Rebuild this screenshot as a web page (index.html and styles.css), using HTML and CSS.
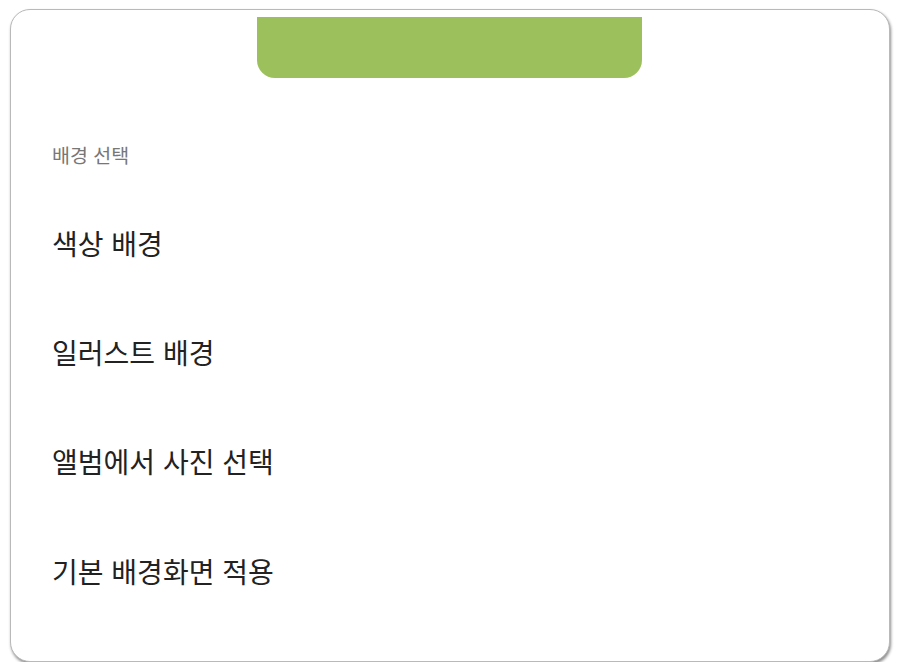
FILE: index.html
```html
<!DOCTYPE html>
<html lang="ko">
<head>
<meta charset="utf-8">
<link rel="stylesheet" href="styles.css">
</head>
<body>
<div class="card">
  <div class="preview"></div>
  <div class="section-title">배경 선택</div>
  <ul class="options">
    <li class="option">색상 배경</li>
    <li class="option">일러스트 배경</li>
    <li class="option">앨범에서 사진 선택</li>
    <li class="option">기본 배경화면 적용</li>
  </ul>
</div>
</body>
</html>
```
FILE: styles.css
```css
html, body {
  margin: 0;
  padding: 0;
  background: #ffffff;
}
body {
  font-family: "Noto Sans CJK KR", "Noto Sans", sans-serif;
  padding: 9px 10px 0 10px;
}
.card {
  box-sizing: border-box;
  width: 880px;
  height: 653px;
  background: #ffffff;
  border: 1px solid #b9b9b9;
  border-radius: 20px;
  box-shadow: 1px 2px 3px rgba(0, 0, 0, 0.45);
  overflow: hidden;
}
.preview {
  width: 385px;
  height: 61px;
  margin: 7px 0 0 246px;
  background: #9cc05b;
  border-radius: 0 0 18px 18px;
}
.section-title {
  margin: 65px 0 0 41px;
  font-size: 19.5px;
  line-height: 24px;
  color: #777777;
}
.options {
  list-style: none;
  margin: 21px 0 0 0;
  padding: 0;
}
.option {
  height: 109.3px;
  display: flex;
  align-items: center;
  padding-left: 41px;
  font-size: 28px;
  color: #222222;
}
```
